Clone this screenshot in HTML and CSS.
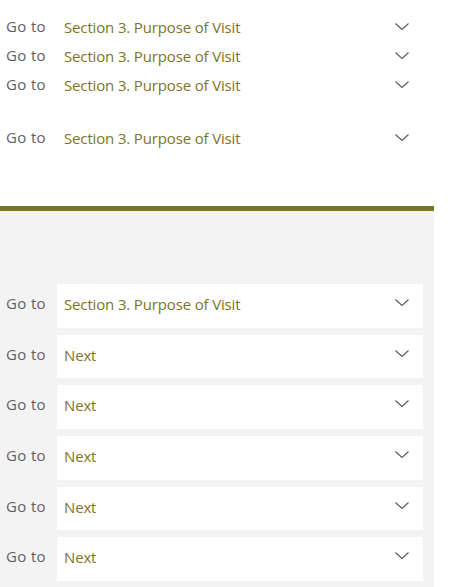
FILE: index.html
```html
<!DOCTYPE html>
<html>
<head>
<meta charset="utf-8">
<link rel="stylesheet" href="styles.css">
</head>
<body>
<div class="top">
  <div class="row">
    <span class="label">Go to</span>
    <div class="select"><span class="value">Section 3. Purpose of Visit</span><svg class="chev" width="14" height="7" viewBox="0 0 14 7"><polyline points="0.5,0.5 7,6.5 13.5,0.5"/></svg></div>
  </div>
  <div class="row">
    <span class="label">Go to</span>
    <div class="select"><span class="value">Section 3. Purpose of Visit</span><svg class="chev" width="14" height="7" viewBox="0 0 14 7"><polyline points="0.5,0.5 7,6.5 13.5,0.5"/></svg></div>
  </div>
  <div class="row">
    <span class="label">Go to</span>
    <div class="select"><span class="value">Section 3. Purpose of Visit</span><svg class="chev" width="14" height="7" viewBox="0 0 14 7"><polyline points="0.5,0.5 7,6.5 13.5,0.5"/></svg></div>
  </div>
  <div class="row row-spaced">
    <span class="label">Go to</span>
    <div class="select"><span class="value">Section 3. Purpose of Visit</span><svg class="chev" width="14" height="7" viewBox="0 0 14 7"><polyline points="0.5,0.5 7,6.5 13.5,0.5"/></svg></div>
  </div>
</div>
<div class="divider"></div>
<div class="gray">
  <div class="brow">
    <span class="label">Go to</span>
    <div class="select box"><span class="value">Section 3. Purpose of Visit</span><svg class="chev" width="14" height="7" viewBox="0 0 14 7"><polyline points="0.5,0.5 7,6.5 13.5,0.5"/></svg></div>
  </div>
  <div class="brow">
    <span class="label">Go to</span>
    <div class="select box"><span class="value">Next</span><svg class="chev" width="14" height="7" viewBox="0 0 14 7"><polyline points="0.5,0.5 7,6.5 13.5,0.5"/></svg></div>
  </div>
  <div class="brow">
    <span class="label">Go to</span>
    <div class="select box"><span class="value">Next</span><svg class="chev" width="14" height="7" viewBox="0 0 14 7"><polyline points="0.5,0.5 7,6.5 13.5,0.5"/></svg></div>
  </div>
  <div class="brow">
    <span class="label">Go to</span>
    <div class="select box"><span class="value">Next</span><svg class="chev" width="14" height="7" viewBox="0 0 14 7"><polyline points="0.5,0.5 7,6.5 13.5,0.5"/></svg></div>
  </div>
  <div class="brow">
    <span class="label">Go to</span>
    <div class="select box"><span class="value">Next</span><svg class="chev" width="14" height="7" viewBox="0 0 14 7"><polyline points="0.5,0.5 7,6.5 13.5,0.5"/></svg></div>
  </div>
  <div class="brow">
    <span class="label">Go to</span>
    <div class="select box"><span class="value">Next</span><svg class="chev" width="14" height="7" viewBox="0 0 14 7"><polyline points="0.5,0.5 7,6.5 13.5,0.5"/></svg></div>
  </div>
</div>
</body>
</html>
```
FILE: styles.css
```css
html, body {
  margin: 0;
  padding: 0;
  background: #ffffff;
}
body {
  font-family: "Open Sans", "Noto Sans", sans-serif;
  font-size: 15px;
  width: 450px;
  overflow: hidden;
}
.top {
  padding-top: 8px;
  height: 206px;
  box-sizing: border-box;
}
.row {
  display: flex;
  height: 29px;
}
.row-spaced {
  margin-top: 24px;
}
.label {
  width: 51px;
  padding-left: 6px;
  color: #636160;
  line-height: 20px;
  padding-top: 8px;
  letter-spacing: 0.35px;
  flex: none;
}
.select {
  width: 366px;
  display: flex;
  align-items: flex-start;
  box-sizing: border-box;
  padding-left: 7px;
  padding-right: 14px;
}
.value {
  flex: 1;
  color: #7d7526;
  line-height: 20px;
  padding-top: 9px;
  letter-spacing: -0.15px;
}
.chev {
  flex: none;
  margin-top: 15px;
}
.chev polyline {
  fill: none;
  stroke: #5e5e5e;
  stroke-width: 1.2;
}
.divider {
  height: 5px;
  width: 434px;
  background: #77761e;
}
.gray {
  background: #f3f3f3;
  width: 434px;
  height: 376px;
  padding-top: 73px;
  box-sizing: border-box;
  display: flex;
  flex-direction: column;
  gap: 7.1px;
}
.brow {
  display: flex;
  height: 43.6px;
  flex: none;
}
.brow .label {
  padding-top: 9px;
}
.box {
  background: #ffffff;
}
.box .value {
  padding-top: 10px;
}
```
